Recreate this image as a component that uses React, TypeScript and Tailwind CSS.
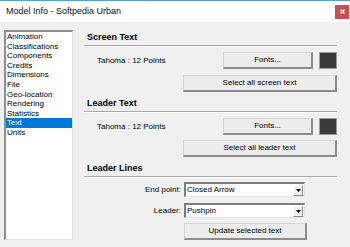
import React from "react";

const items = [
  "Animation",
  "Classifications",
  "Components",
  "Credits",
  "Dimensions",
  "File",
  "Geo-location",
  "Rendering",
  "Statistics",
  "Text",
  "Units",
];

function Btn({ w, children }: { w: string; children: React.ReactNode }) {
  return (
    <div
      className={`${w} h-[17px] flex items-center justify-center bg-[#ececec] border-t border-l border-[#d4d4d4] border-r-2 border-b-2 border-r-[#8c8c8c] border-b-[#8c8c8c] text-[8px] leading-none text-black`}
    >
      {children}
    </div>
  );
}

function Swatch() {
  return <div className="w-[18px] h-[17px] ml-[6px] bg-[#3a3a3a] border border-[#9a9a9a]" />;
}

function Section({ title, first }: { title: string; first?: boolean }) {
  return (
    <div className={first ? "" : "mt-[5px]"}>
      <div className="h-[12px] leading-[12px] pl-[3px] text-[9px] font-bold text-black">{title}</div>
      <div className="mt-[2px] h-[2px] border-t border-[#a8a8a8] border-b border-b-white" />
    </div>
  );
}

function Combo({ label, value, top }: { label: string; value: string; top: string }) {
  return (
    <div className={`flex items-center ${top}`}>
      <div className="w-[98px] text-right text-[8px] leading-none pr-[1px]">{label}</div>
      <div className="ml-[2px] w-[121px] h-[15px] bg-white border-t-2 border-l-2 border-[#7c7c7c] border-r border-b border-r-[#e6e6e6] border-b-[#e6e6e6] flex items-center">
        <div className="flex-1 pl-[1px] text-[8px] leading-none text-black">{value}</div>
        <div className="w-[10px] h-[11px] mr-[1px] bg-[#f0f0f0] border-t border-l border-white border-r border-b border-r-[#8a8a8a] border-b-[#8a8a8a] flex items-center justify-center">
          <svg width="5" height="3" viewBox="0 0 5 3">
            <path d="M0 0H5L2.5 3Z" fill="#000" />
          </svg>
        </div>
      </div>
    </div>
  );
}

export default function App() {
  return (
    <div
      className="relative w-[350px] h-[247px] bg-[#f0f0f0] overflow-hidden text-black"
      style={{ fontFamily: '"Liberation Sans", Arial, sans-serif' }}
    >
      {/* Title bar */}
      <div className="h-[22px] bg-white border-t border-[#5aa0dc] flex items-center">
        <div className="pl-[6px] text-[9px] leading-none text-[#111]">Model Info - Softpedia Urban</div>
        <div className="ml-auto mr-[1px] w-[14px] h-[14px] bg-[#c85050] flex items-center justify-center">
          <svg width="5" height="5" viewBox="0 0 5 5">
            <path d="M0.5 0.5L4.5 4.5M4.5 0.5L0.5 4.5" stroke="#fff" strokeWidth="1.2" />
          </svg>
        </div>
      </div>

      <div className="flex pt-[8px] pl-[4px]">
        {/* List */}
        <div className="w-[69px] h-[210px] bg-white border-t-2 border-l-2 border-[#8e8e8e] border-r border-b border-r-[#e2e2e2] border-b-[#e2e2e2]">
          {items.map((it) => (
            <div
              key={it}
              className={`h-[9.6px] leading-[9.6px] pl-[1px] text-[8px] whitespace-nowrap ${
                it === "Text" ? "bg-[#0078d7] text-white" : "text-black"
              }`}
            >
              {it}
            </div>
          ))}
        </div>

        {/* Right panel */}
        <div className="ml-[11px] w-[262px] pr-[9px] pt-[1px]">
          <Section title="Screen Text" first />
          <div className="flex items-center mt-[5px]">
            <div className="ml-[13px] text-[8px] leading-none">Tahoma : 12 Points</div>
            <div className="ml-auto flex">
              <Btn w="w-[90px]">Fonts...</Btn>
              <Swatch />
            </div>
          </div>
          <div className="flex justify-end mt-[6px]">
            <Btn w="w-[154px]">Select all screen text</Btn>
          </div>

          <Section title="Leader Text" />
          <div className="flex items-center mt-[5px]">
            <div className="ml-[13px] text-[8px] leading-none">Tahoma : 12 Points</div>
            <div className="ml-auto flex">
              <Btn w="w-[90px]">Fonts...</Btn>
              <Swatch />
            </div>
          </div>
          <div className="flex justify-end mt-[5px]">
            <Btn w="w-[154px]">Select all leader text</Btn>
          </div>

          <Section title="Leader Lines" />
          <Combo label="End point:" value="Closed Arrow" top="mt-[4px]" />
          <Combo label="Leader:" value="Pushpin" top="mt-[6px]" />
          <div className="flex mt-[5px] pl-[100px]">
            <Btn w="w-[123px]">Update selected text</Btn>
          </div>
        </div>
      </div>
    </div>
  );
}
